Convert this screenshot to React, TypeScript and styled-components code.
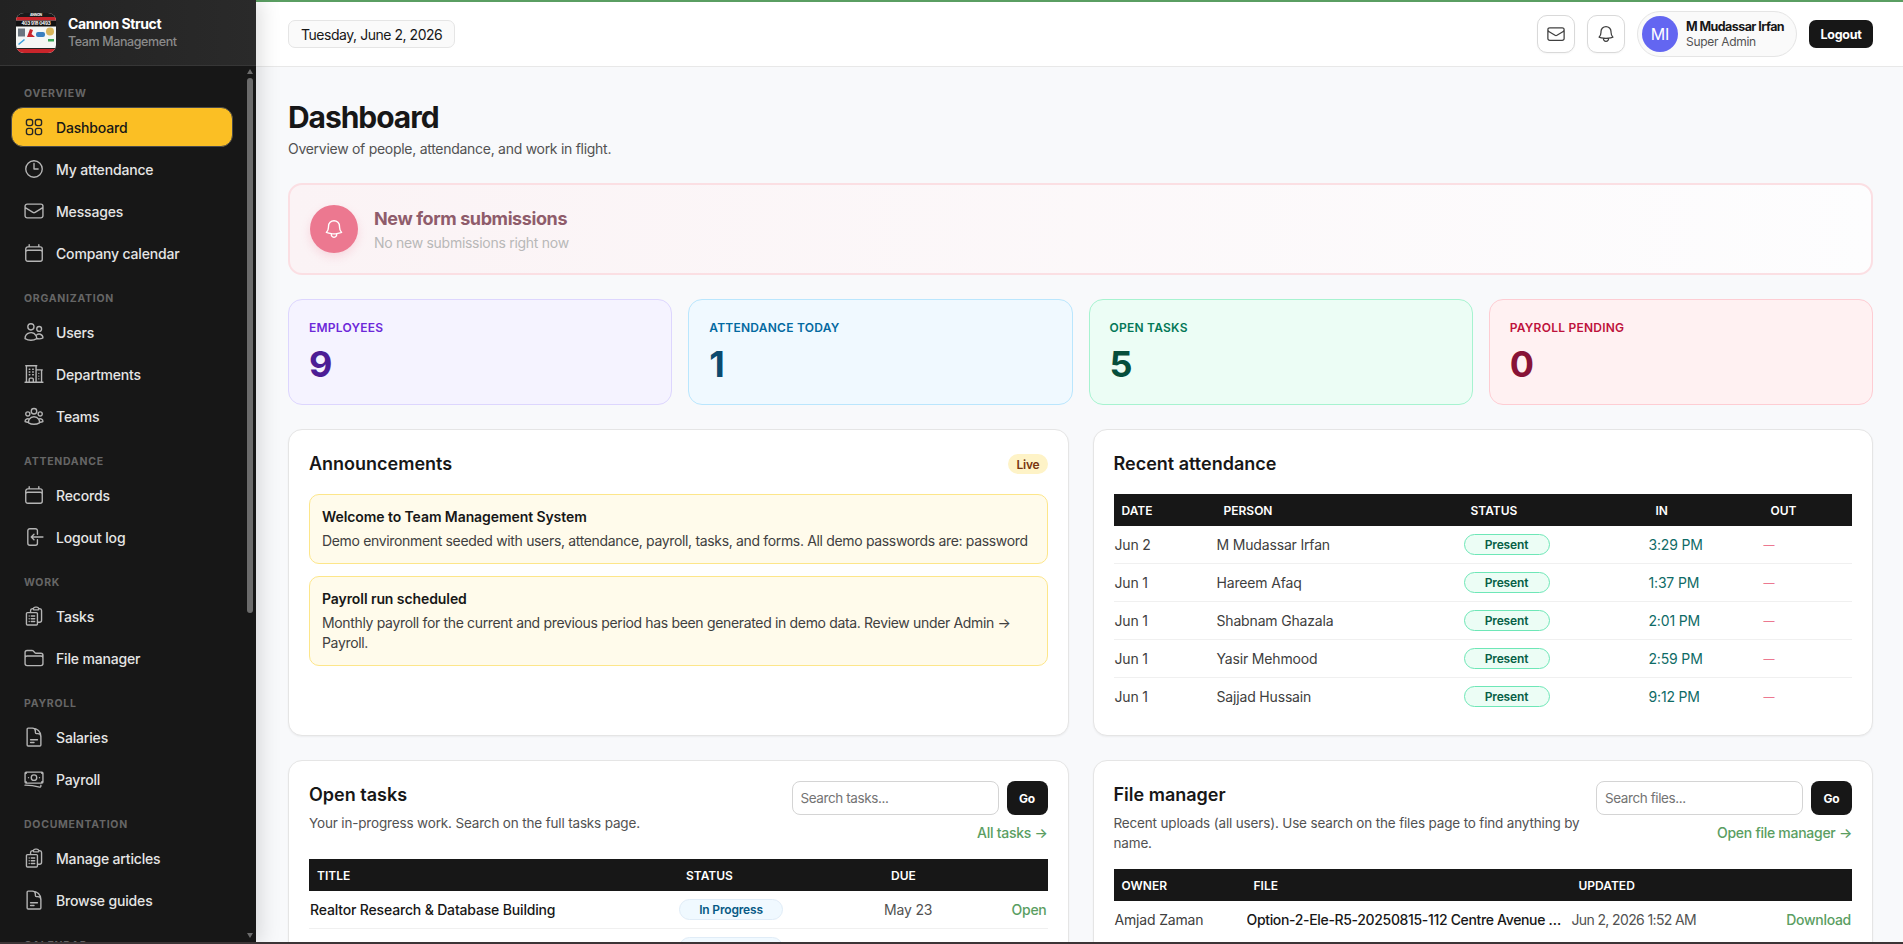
import React from "react";
import styled, { createGlobalStyle } from "styled-components";
import {
  HiOutlineSquares2X2,
  HiOutlineClock,
  HiOutlineEnvelope,
  HiOutlineCalendar,
  HiOutlineUsers,
  HiOutlineBuildingOffice2,
  HiOutlineUserGroup,
  HiOutlineArrowLeftOnRectangle,
  HiOutlineClipboardDocumentList,
  HiOutlineFolder,
  HiOutlineDocumentText,
  HiOutlineBanknotes,
  HiOutlineBell,
} from "react-icons/hi2";

const FONT = `Inter, "Liberation Sans", sans-serif`;

const GlobalStyle = createGlobalStyle`
  html, body {
    margin: 0;
    height: 100%;
    overflow: hidden;
    font-family: ${FONT};
    letter-spacing: -0.012em;
    color: #171717;
  }
  * {
    box-sizing: border-box;
  }
`;

const Shell = styled.div`
  display: flex;
  position: relative;
  height: 944px;
  overflow: hidden;
  background: #f8f9fb;

  /* thin dark edge along the bottom of the window */
  &::after {
    content: "";
    position: absolute;
    left: 0;
    right: 0;
    bottom: 0;
    height: 2px;
    background: #3c3436;
    z-index: 3;
  }
`;

const Sidebar = styled.aside`
  width: 256px;
  flex: none;
  display: flex;
  flex-direction: column;
  background: #171717;
  box-shadow: 4px 0 20px rgba(0, 0, 0, 0.14);
  position: relative;
  z-index: 2;
`;

const Brand = styled.div`
  height: 66px;
  flex: none;
  display: flex;
  align-items: center;
  gap: 12px;
  padding: 0 16px;
  background: linear-gradient(90deg, #222222, #2a2a2a);
  border-bottom: 1px solid #363636;
`;

const BrandText = styled.div`
  display: flex;
  flex-direction: column;
  gap: 1px;
`;

const BrandName = styled.div`
  font-size: 14px;
  line-height: 18px;
  font-weight: 700;
  color: #ffffff;
  letter-spacing: -0.03em;
`;

const BrandSub = styled.div`
  font-size: 12.5px;
  line-height: 16px;
  font-weight: 500;
  color: #8a8a8a;
  letter-spacing: -0.032em;
`;

const Nav = styled.nav`
  flex: 1;
  min-height: 0;
  overflow: hidden;
  padding: 20px 23px 0 11px;
  display: flex;
  flex-direction: column;
`;

const NavLabel = styled.div`
  flex: none;
  font-size: 10.5px;
  line-height: 16px;
  font-weight: 700;
  letter-spacing: 0.07em;
  color: #666666;
  padding-left: 13px;
  margin: 16px 0 5px;

  &:first-child {
    margin-top: 0;
  }
`;

const NavItem = styled.a<{ $active?: boolean }>`
  flex: none;
  height: 40px;
  margin-bottom: 2px;
  display: flex;
  align-items: center;
  gap: 11px;
  padding-left: 11px;
  font-size: 14px;
  font-weight: 500;
  letter-spacing: -0.012em;
  border-radius: 12px;
  border: 1px solid ${(p) => (p.$active ? "#4a4a4a" : "transparent")};
  color: ${(p) => (p.$active ? "#171717" : "#e5e5e5")};
  background: ${(p) => (p.$active ? "#fbbf24" : "transparent")};

  svg {
    width: 22px;
    height: 22px;
    flex: none;
    color: ${(p) => (p.$active ? "#262626" : "#b5b5b5")};
  }
`;

/* scrollbar of the nav list, drawn over its right edge */
const ScrollBar = styled.div`
  position: absolute;
  top: 66px;
  bottom: 2px;
  right: 3px;
  width: 6px;
`;

const ScrollThumb = styled.div`
  position: absolute;
  top: 12px;
  left: 0;
  right: 0;
  height: 535px;
  border-radius: 3px;
  background: #6b6b6b;
`;

const ScrollArrow = styled.div<{ $down?: boolean }>`
  position: absolute;
  left: 0;
  ${(p) => (p.$down ? "bottom: 4px;" : "top: 3px;")}
  width: 0;
  height: 0;
  border-left: 3px solid transparent;
  border-right: 3px solid transparent;
  ${(p) =>
    p.$down ? "border-top: 5px solid #6b6b6b;" : "border-bottom: 5px solid #6b6b6b;"}
`;

const Main = styled.div`
  flex: 1;
  min-width: 0;
  display: flex;
  flex-direction: column;
  overflow: hidden;
`;

const Topbar = styled.header`
  height: 67px;
  flex: none;
  display: flex;
  align-items: center;
  justify-content: space-between;
  padding: 0 30px 0 32px;
  background: #ffffff;
  border-top: 2px solid #5a9e62;
  border-bottom: 1px solid #e8e8e8;
`;

const DatePill = styled.div`
  height: 28px;
  padding: 0 12px;
  display: flex;
  align-items: center;
  font-size: 14px;
  font-weight: 400;
  letter-spacing: -0.033em;
  color: #171717;
  background: #fafafa;
  border: 1px solid #e5e5e5;
  border-radius: 7px;
`;

const TopActions = styled.div`
  display: flex;
  align-items: center;
  gap: 12px;
`;

const IconButton = styled.button`
  width: 38px;
  height: 38px;
  padding: 0;
  display: flex;
  align-items: center;
  justify-content: center;
  background: #ffffff;
  border: 1px solid #d9d9d9;
  border-radius: 10px;
  color: #404040;
  box-shadow: 0 1px 2px rgba(0, 0, 0, 0.04);

  svg {
    width: 20px;
    height: 20px;
  }
`;

const UserPill = styled.div`
  width: 160px;
  height: 46px;
  padding: 0 4px;
  display: flex;
  align-items: center;
  gap: 8px;
  background: #fafafa;
  border: 1px solid #e5e5e5;
  border-radius: 23px;
`;

const Avatar = styled.div`
  width: 36px;
  height: 36px;
  flex: none;
  border-radius: 50%;
  display: flex;
  align-items: center;
  justify-content: center;
  background: #6366f1;
  color: #ffffff;
  font-size: 16px;
`;

const UserName = styled.div`
  font-size: 12.5px;
  line-height: 15px;
  font-weight: 700;
  letter-spacing: -0.045em;
  white-space: nowrap;
`;

const UserRole = styled.div`
  font-size: 12px;
  line-height: 15px;
  letter-spacing: -0.025em;
  color: #525252;
`;

const DarkButton = styled.button`
  height: 28px;
  width: 64px;
  padding: 0;
  border: 0;
  border-radius: 7px;
  background: #171717;
  color: #ffffff;
  font-family: ${FONT};
  font-size: 12.5px;
  font-weight: 700;
  letter-spacing: -0.02em;
`;

const Content = styled.main`
  flex: 1;
  min-height: 0;
  overflow: hidden;
  padding: 32px 30px 0 32px;
  display: flex;
  flex-direction: column;
`;

const PageTitle = styled.h1`
  margin: 0;
  font-size: 30px;
  line-height: 36px;
  font-weight: 700;
  letter-spacing: -0.035em;
  color: #171717;
`;

const PageSub = styled.p`
  margin: 4px 0 24px;
  font-size: 14px;
  line-height: 20px;
  letter-spacing: -0.02em;
  color: #525252;
`;

const Alert = styled.section`
  flex: none;
  height: 92px;
  display: flex;
  align-items: center;
  gap: 16px;
  padding: 0 20px;
  margin-bottom: 24px;
  border: 2px solid #fbdfe3;
  border-radius: 14px;
  background: linear-gradient(90deg, #fbf3f5, #fdfdfe);
`;

const AlertIcon = styled.div`
  width: 48px;
  height: 48px;
  flex: none;
  border-radius: 50%;
  display: flex;
  align-items: center;
  justify-content: center;
  background: #ec7890;
  color: #ffffff;
  box-shadow: 0 4px 10px rgba(236, 120, 144, 0.22);

  svg {
    width: 22px;
    height: 22px;
  }
`;

const AlertText = styled.div`
  padding-top: 2px;
`;

const AlertTitle = styled.div`
  font-size: 18px;
  line-height: 24px;
  font-weight: 700;
  letter-spacing: -0.022em;
  color: #8f5c6b;
`;

const AlertSub = styled.div`
  margin-top: 2px;
  font-size: 14px;
  line-height: 20px;
  letter-spacing: -0.02em;
  color: #b8b8b8;
`;

const StatGrid = styled.div`
  flex: none;
  display: grid;
  grid-template-columns: repeat(4, 1fr);
  gap: 16px;
  margin-bottom: 24px;
`;

const STAT_TONES = {
  violet: { bg: "#f5f3ff", line: "#ddd6fe", label: "#6d28d9", value: "#4c1d95" },
  sky: { bg: "#f0f9ff", line: "#bae6fd", label: "#0369a1", value: "#0c4a6e" },
  green: { bg: "#ecfdf5", line: "#a7f3d0", label: "#047857", value: "#064e3b" },
  rose: { bg: "#fff1f2", line: "#fecdd3", label: "#be123c", value: "#881337" },
};

type Tone = keyof typeof STAT_TONES;

const StatCard = styled.div<{ $tone: Tone }>`
  height: 106px;
  padding: 20px;
  border-radius: 14px;
  border: 1px solid ${(p) => STAT_TONES[p.$tone].line};
  background: ${(p) => STAT_TONES[p.$tone].bg};
`;

const StatLabel = styled.div<{ $tone: Tone }>`
  font-size: 12px;
  line-height: 16px;
  font-weight: 600;
  letter-spacing: 0.02em;
  text-transform: uppercase;
  color: ${(p) => STAT_TONES[p.$tone].label};
`;

const StatValue = styled.div<{ $tone: Tone }>`
  margin-top: 8px;
  font-size: 36px;
  line-height: 40px;
  font-weight: 700;
  color: ${(p) => STAT_TONES[p.$tone].value};
`;

const PanelGrid = styled.div`
  flex: none;
  display: grid;
  grid-template-columns: 1fr 1fr;
  gap: 24px;
`;

const Panel = styled.section`
  min-width: 0;
  padding: 20px;
  background: #ffffff;
  border: 1px solid #e5e5e5;
  border-radius: 14px;
  box-shadow: 0 1px 2px rgba(0, 0, 0, 0.05);
`;

const PanelHead = styled.div`
  display: flex;
  align-items: flex-start;
  justify-content: space-between;
  gap: 8px;
  margin-bottom: 16px;
`;

const PanelTitle = styled.h2`
  margin: 0;
  font-size: 18px;
  line-height: 28px;
  font-weight: 600;
  letter-spacing: 0;
  color: #171717;
`;

const PanelSub = styled.p`
  margin: 4px 0 0;
  font-size: 13.5px;
  line-height: 20px;
  letter-spacing: -0.012em;
  color: #525252;
`;

const LiveBadge = styled.span`
  margin-top: 4px;
  height: 20px;
  padding: 0 8px;
  display: flex;
  align-items: center;
  border-radius: 10px;
  background: #fef3c7;
  color: #78350f;
  font-size: 12px;
  font-weight: 600;
`;

const NoticeList = styled.div`
  display: flex;
  flex-direction: column;
  gap: 12px;
`;

const Notice = styled.article`
  padding: 12px;
  background: #fffbeb;
  border: 1px solid #fde68a;
  border-radius: 10px;
`;

const NoticeTitle = styled.div`
  font-size: 14px;
  line-height: 20px;
  font-weight: 600;
  letter-spacing: -0.006em;
`;

const NoticeBody = styled.div`
  margin-top: 4px;
  font-size: 14px;
  line-height: 20px;
  color: #404040;
  letter-spacing: -0.024em;
`;

const SearchBlock = styled.div`
  flex: none;
  display: flex;
  flex-direction: column;
  align-items: flex-end;
  gap: 8px;
`;

const SearchRow = styled.form`
  display: flex;
  gap: 8px;
`;

const SearchInput = styled.input`
  width: 207px;
  height: 34px;
  padding: 0 8px;
  background: #ffffff;
  border: 1px solid #d4d4d4;
  border-radius: 8px;
  font-family: ${FONT};
  font-size: 13.5px;
  letter-spacing: -0.03em;
  outline: none;

  &::placeholder {
    color: #737373;
  }
`;

const GoButton = styled(DarkButton)`
  height: 34px;
  width: 41px;
  border-radius: 8px;
  font-size: 12px;
`;

const GreenLink = styled.a`
  font-size: 14px;
  line-height: 20px;
  font-weight: 500;
  color: #5a9e62;
  letter-spacing: -0.02em;
  white-space: nowrap;
`;

const Table = styled.table`
  width: 100%;
  table-layout: fixed;
  border-collapse: separate;
  border-spacing: 0;
`;

const Col = styled.col<{ $w?: number }>`
  width: ${(p) => (p.$w ? `${p.$w}px` : "auto")};
`;

const Th = styled.th`
  height: 32px;
  padding: 0 0 0 8px;
  background: #171717;
  color: #ffffff;
  text-align: left;
  font-size: 12px;
  font-weight: 600;
  letter-spacing: 0;
  text-transform: uppercase;
`;

type CellTone = "strong" | "time" | "muted" | "stamp" | "dash";

const CELL_COLORS: Record<CellTone, string> = {
  strong: "#171717",
  time: "#0f6b66",
  muted: "#525252",
  stamp: "#525252",
  dash: "#ec7890",
};

const Td = styled.td<{ $tone?: CellTone; $right?: boolean }>`
  height: 38px;
  padding: 0 1px;
  border-bottom: 1px solid #f0f0f0;
  font-size: ${(p) => (p.$tone === "dash" ? 11 : 14)}px;
  font-weight: ${(p) => (p.$tone === "strong" ? 500 : 400)};
  text-align: ${(p) => (p.$right ? "right" : "left")};
  white-space: nowrap;
  letter-spacing: ${(p) => (p.$tone === "stamp" ? "-0.045em" : "-0.012em")};
  color: ${(p) => (p.$tone ? CELL_COLORS[p.$tone] : "#404040")};

  tr:last-child > & {
    height: 37px;
    border-bottom: 0;
  }
`;

const FileName = styled.span`
  display: block;
  max-width: 316px;
  overflow: hidden;
  text-overflow: ellipsis;
  letter-spacing: -0.024em;
`;

const StatusBadge = styled.span<{ $kind: "present" | "progress" }>`
  display: inline-flex;
  align-items: center;
  justify-content: center;
  height: 21px;
  width: ${(p) => (p.$kind === "present" ? 86 : 104)}px;
  vertical-align: middle;
  border-radius: 11px;
  font-size: 12px;
  font-weight: 600;
  border: ${(p) =>
    p.$kind === "present" ? "1.5px solid #6ee7b7" : "1.5px solid #e0ecf7"};
  background: ${(p) => (p.$kind === "present" ? "#ecfdf5" : "#f0f9ff")};
  color: ${(p) => (p.$kind === "present" ? "#065f46" : "#075985")};
`;

const LogoMark = () => (
  <svg width="40" height="40" viewBox="0 0 40 40" aria-label="Cannon Struct logo">
    <defs>
      <clipPath id="logo-clip">
        <rect width="40" height="40" rx="8" />
      </clipPath>
    </defs>
    <g clipPath="url(#logo-clip)">
      <rect width="40" height="40" fill="#f4f6f4" />
      <rect width="40" height="4" fill="#1a1a1a" />
      <rect y="4" width="40" height="3.5" fill="#c9252b" />
      <rect y="7.5" width="40" height="6" fill="#111111" />
      <text x="20" y="12.3" fontSize="4.6" fontWeight="700" fill="#ffffff" textAnchor="middle" fontFamily={FONT}>
        403 918 0493
      </text>
      <text x="20" y="3.3" fontSize="3.4" fontWeight="700" fill="#ffffff" textAnchor="middle" fontFamily={FONT}>
        ANNON
      </text>
      <rect x="2" y="15.5" width="7" height="8" fill="#6c7680" />
      <path d="M11 24l3-8 3 1-1.5 4 3.5 3z" fill="#c9252b" />
      <rect x="20" y="19" width="9" height="5" rx="2" fill="#3a7fbf" />
      <circle cx="34" cy="18.5" r="4" fill="#d9b65a" />
      <path d="M2 31l6-5 1 1-6 5z" fill="#3a9fdc" />
      <rect x="32" y="26" width="6" height="2.5" fill="#3aa655" />
      <rect y="35" width="40" height="1" fill="#222222" />
      <rect y="36" width="40" height="4" fill="#c9252b" />
    </g>
  </svg>
);

const NAV = [
  {
    label: "Overview",
    items: [
      ["Dashboard", HiOutlineSquares2X2],
      ["My attendance", HiOutlineClock],
      ["Messages", HiOutlineEnvelope],
      ["Company calendar", HiOutlineCalendar],
    ],
  },
  {
    label: "Organization",
    items: [
      ["Users", HiOutlineUsers],
      ["Departments", HiOutlineBuildingOffice2],
      ["Teams", HiOutlineUserGroup],
    ],
  },
  {
    label: "Attendance",
    items: [
      ["Records", HiOutlineCalendar],
      ["Logout log", HiOutlineArrowLeftOnRectangle],
    ],
  },
  {
    label: "Work",
    items: [
      ["Tasks", HiOutlineClipboardDocumentList],
      ["File manager", HiOutlineFolder],
    ],
  },
  {
    label: "Payroll",
    items: [
      ["Salaries", HiOutlineDocumentText],
      ["Payroll", HiOutlineBanknotes],
    ],
  },
  {
    label: "Documentation",
    items: [
      ["Manage articles", HiOutlineClipboardDocumentList],
      ["Browse guides", HiOutlineDocumentText],
    ],
  },
  {
    label: "Calendar",
    items: [],
  },
] as const;

const ATTENDANCE = [
  ["Jun 2", "M Mudassar Irfan", "3:29 PM"],
  ["Jun 1", "Hareem Afaq", "1:37 PM"],
  ["Jun 1", "Shabnam Ghazala", "2:01 PM"],
  ["Jun 1", "Yasir Mehmood", "2:59 PM"],
  ["Jun 1", "Sajjad Hussain", "9:12 PM"],
];

const STATS: { label: string; value: string; tone: Tone }[] = [
  { label: "Employees", value: "9", tone: "violet" },
  { label: "Attendance today", value: "1", tone: "sky" },
  { label: "Open tasks", value: "5", tone: "green" },
  { label: "Payroll pending", value: "0", tone: "rose" },
];

export default function App() {
  return (
    <Shell>
      <GlobalStyle />
      <Sidebar>
        <Brand>
          <LogoMark />
          <BrandText>
            <BrandName>Cannon Struct</BrandName>
            <BrandSub>Team Management</BrandSub>
          </BrandText>
        </Brand>
        <Nav>
          {NAV.map((group) => (
            <React.Fragment key={group.label}>
              <NavLabel>{group.label.toUpperCase()}</NavLabel>
              {group.items.map(([name, Icon]) => (
                <NavItem key={name} $active={name === "Dashboard"}>
                  <Icon />
                  {name}
                </NavItem>
              ))}
            </React.Fragment>
          ))}
        </Nav>
        <ScrollBar>
          <ScrollArrow />
          <ScrollThumb />
          <ScrollArrow $down />
        </ScrollBar>
      </Sidebar>
      <Main>
        <Topbar>
          <DatePill>Tuesday, June 2, 2026</DatePill>
          <TopActions>
            <IconButton aria-label="Messages">
              <HiOutlineEnvelope />
            </IconButton>
            <IconButton aria-label="Notifications">
              <HiOutlineBell />
            </IconButton>
            <UserPill>
              <Avatar>MI</Avatar>
              <div>
                <UserName>M Mudassar Irfan</UserName>
                <UserRole>Super Admin</UserRole>
              </div>
            </UserPill>
            <DarkButton>Logout</DarkButton>
          </TopActions>
        </Topbar>
        <Content>
          <PageTitle>Dashboard</PageTitle>
          <PageSub>Overview of people, attendance, and work in flight.</PageSub>
          <Alert>
            <AlertIcon>
              <HiOutlineBell />
            </AlertIcon>
            <AlertText>
              <AlertTitle>New form submissions</AlertTitle>
              <AlertSub>No new submissions right now</AlertSub>
            </AlertText>
          </Alert>
          <StatGrid>
            {STATS.map((s) => (
              <StatCard key={s.label} $tone={s.tone}>
                <StatLabel $tone={s.tone}>{s.label}</StatLabel>
                <StatValue $tone={s.tone}>{s.value}</StatValue>
              </StatCard>
            ))}
          </StatGrid>
          <PanelGrid>
            <Panel>
              <PanelHead>
                <PanelTitle>Announcements</PanelTitle>
                <LiveBadge>Live</LiveBadge>
              </PanelHead>
              <NoticeList>
                <Notice>
                  <NoticeTitle>Welcome to Team Management System</NoticeTitle>
                  <NoticeBody>
                    Demo environment seeded with users, attendance, payroll, tasks, and forms. All demo passwords are: password
                  </NoticeBody>
                </Notice>
                <Notice>
                  <NoticeTitle>Payroll run scheduled</NoticeTitle>
                  <NoticeBody>
                    Monthly payroll for the current and previous period has been generated in demo data. Review under Admin → Payroll.
                  </NoticeBody>
                </Notice>
              </NoticeList>
            </Panel>
            <Panel>
              <PanelHead>
                <PanelTitle>Recent attendance</PanelTitle>
              </PanelHead>
              <Table>
                <colgroup>
                  <Col $w={102} />
                  <Col $w={247} />
                  <Col $w={185} />
                  <Col $w={115} />
                  <Col />
                </colgroup>
                <thead>
                  <tr>
                    <Th>Date</Th>
                    <Th>Person</Th>
                    <Th>Status</Th>
                    <Th>In</Th>
                    <Th>Out</Th>
                  </tr>
                </thead>
                <tbody>
                  {ATTENDANCE.map(([date, person, time]) => (
                    <tr key={person}>
                      <Td>{date}</Td>
                      <Td>{person}</Td>
                      <Td>
                        <StatusBadge $kind="present">Present</StatusBadge>
                      </Td>
                      <Td $tone="time">{time}</Td>
                      <Td $tone="dash">—</Td>
                    </tr>
                  ))}
                </tbody>
              </Table>
            </Panel>
            <Panel>
              <PanelHead>
                <div>
                  <PanelTitle>Open tasks</PanelTitle>
                  <PanelSub>Your in-progress work. Search on the full tasks page.</PanelSub>
                </div>
                <SearchBlock>
                  <SearchRow>
                    <SearchInput placeholder="Search tasks..." />
                    <GoButton type="button">Go</GoButton>
                  </SearchRow>
                  <GreenLink>All tasks →</GreenLink>
                </SearchBlock>
              </PanelHead>
              <Table>
                <colgroup>
                  <Col $w={369} />
                  <Col $w={205} />
                  <Col $w={100} />
                  <Col />
                </colgroup>
                <thead>
                  <tr>
                    <Th>Title</Th>
                    <Th>Status</Th>
                    <Th>Due</Th>
                    <Th />
                  </tr>
                </thead>
                <tbody>
                  <tr>
                    <Td $tone="strong">Realtor Research &amp; Database Building</Td>
                    <Td>
                      <StatusBadge $kind="progress">In Progress</StatusBadge>
                    </Td>
                    <Td $tone="muted">May 23</Td>
                    <Td $right>
                      <GreenLink>Open</GreenLink>
                    </Td>
                  </tr>
                  <tr>
                    <Td />
                    <Td>
                      <StatusBadge $kind="progress">In Progress</StatusBadge>
                    </Td>
                    <Td />
                    <Td />
                  </tr>
                </tbody>
              </Table>
            </Panel>
            <Panel>
              <PanelHead>
                <div>
                  <PanelTitle>File manager</PanelTitle>
                  <PanelSub>
                    Recent uploads (all users). Use search on the files page to find anything by name.
                  </PanelSub>
                </div>
                <SearchBlock>
                  <SearchRow>
                    <SearchInput placeholder="Search files..." />
                    <GoButton type="button">Go</GoButton>
                  </SearchRow>
                  <GreenLink>Open file manager →</GreenLink>
                </SearchBlock>
              </PanelHead>
              <Table>
                <colgroup>
                  <Col $w={132} />
                  <Col $w={325} />
                  <Col $w={190} />
                  <Col />
                </colgroup>
                <thead>
                  <tr>
                    <Th>Owner</Th>
                    <Th>File</Th>
                    <Th>Updated</Th>
                    <Th />
                  </tr>
                </thead>
                <tbody>
                  <tr>
                    <Td>Amjad Zaman</Td>
                    <Td $tone="strong">
                      <FileName>Option-2-Ele-R5-20250815-112 Centre Avenue Northeast.pdf</FileName>
                    </Td>
                    <Td $tone="stamp">Jun 2, 2026 1:52 AM</Td>
                    <Td $right>
                      <GreenLink>Download</GreenLink>
                    </Td>
                  </tr>
                </tbody>
              </Table>
            </Panel>
          </PanelGrid>
        </Content>
      </Main>
    </Shell>
  );
}
